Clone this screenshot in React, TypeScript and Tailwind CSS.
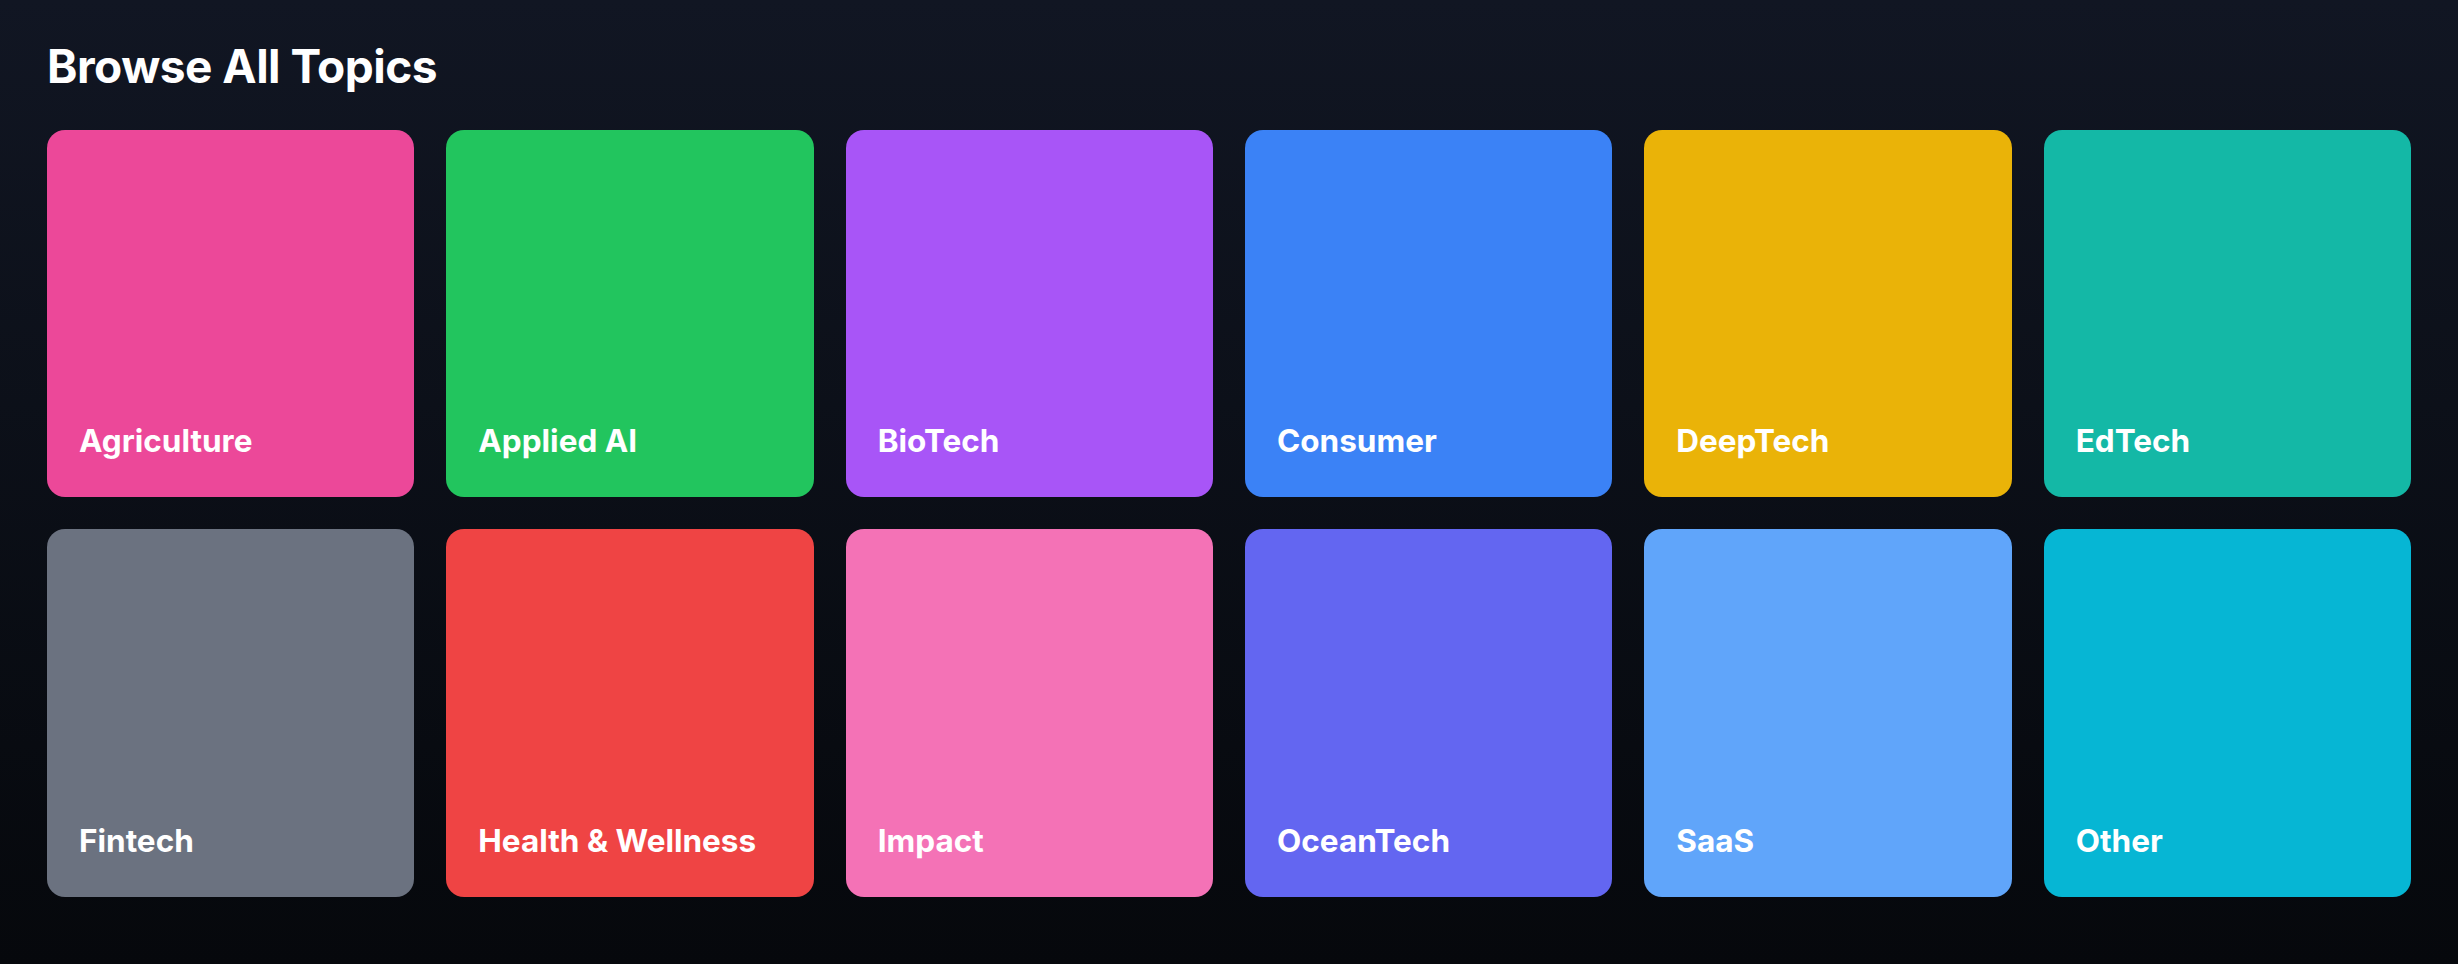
import React from 'react';

interface Topic {
  name: string;
  color: string;
}

// each class written out in full so Tailwind picks them up
const topics: Topic[] = [
  { name: 'Agriculture', color: 'bg-[#ec4899]' },
  { name: 'Applied AI', color: 'bg-[#22c55e]' },
  { name: 'BioTech', color: 'bg-[#a855f7]' },
  { name: 'Consumer', color: 'bg-[#3b82f6]' },
  { name: 'DeepTech', color: 'bg-[#eab308]' },
  { name: 'EdTech', color: 'bg-[#14b8a6]' },
  { name: 'Fintech', color: 'bg-[#6b7280]' },
  { name: 'Health & Wellness', color: 'bg-[#ef4444]' },
  { name: 'Impact', color: 'bg-[#f472b6]' },
  { name: 'OceanTech', color: 'bg-[#6366f1]' },
  { name: 'SaaS', color: 'bg-[#60a5fa]' },
  { name: 'Other', color: 'bg-[#06b6d4]' },
];

const TopicCard: React.FC<{ topic: Topic }> = ({ topic }) => (
  <a
    href="#"
    className={`${topic.color} aspect-square rounded-[18px] flex items-end px-[32px] pb-[35px] hover:brightness-110 transition`}
  >
    <span className="text-white font-bold text-[31.5px] leading-[42px]">{topic.name}</span>
  </a>
);

export default function App() {
  return (
    <div
      className="min-h-screen bg-gradient-to-b from-[#111623] to-[#06080c] px-[47px] pt-[39px] pb-16"
      style={{ fontFamily: 'Inter, "Noto Sans", sans-serif' }}
    >
      <h2 className="text-white font-bold text-[46px] leading-[55px] tracking-[-0.5px] mb-[36px]">Browse All Topics</h2>
      <div className="grid grid-cols-6 gap-8">
        {topics.map((t) => (
          <TopicCard key={t.name} topic={t} />
        ))}
      </div>
    </div>
  );
}
